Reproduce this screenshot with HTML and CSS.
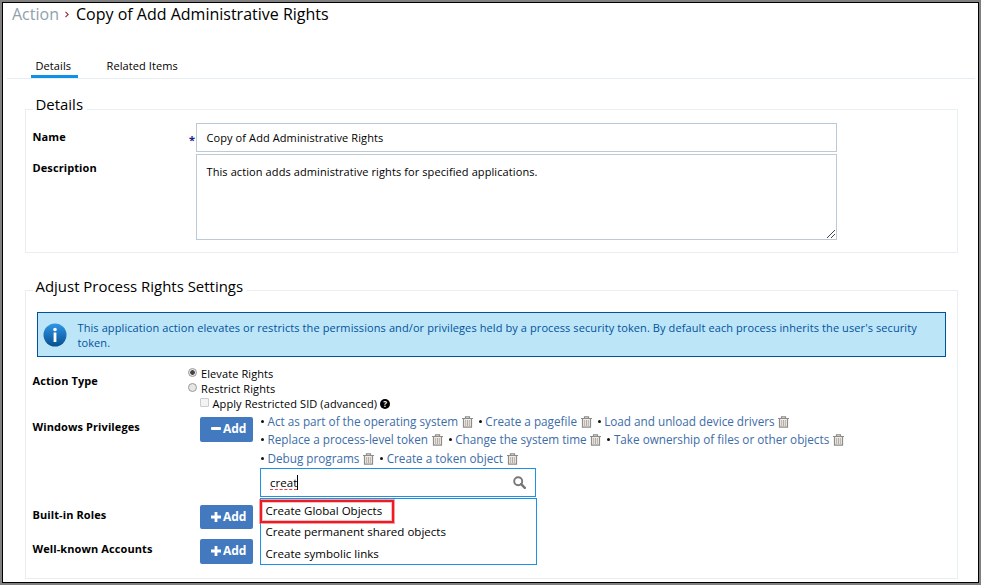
FILE: index.html
```html
<!DOCTYPE html>
<html lang="en">
<head>
<meta charset="utf-8">
<title>Copy of Add Administrative Rights</title>
<link rel="stylesheet" href="styles.css">
</head>
<body>
<svg class="defs" width="0" height="0">
  <symbol id="trash" viewBox="0 0 11 12"><path d="M0 2.5h11M3.5 2V.8h4V2" fill="none" stroke="#8c8c8c" stroke-width="1.2"/><path d="M1.5 3v8.2h8V3" fill="#f3ece4" stroke="#8c8c8c" stroke-width="1.2"/><path d="M3.7 4v6M5.5 4v6M7.3 4v6" stroke="#a9a5a2" stroke-width=".9"/></symbol>
  <symbol id="plus" viewBox="0 0 10 10"><path d="M5 0v10M0 5h10" stroke="#fff" stroke-width="2.8"/></symbol>
</svg>
<div class="window">
  <header class="crumbs"><a class="parent">Action</a><svg class="chev" width="4" height="7" viewBox="0 0 4 7"><path d="M.5 .8L3.2 3.5.5 6.2" fill="none" stroke="#8a3048" stroke-width="1.1"/></svg><h1>Copy of Add Administrative Rights</h1></header>
  <nav class="tabs"><a class="tab active">Details</a><a class="tab">Related Items</a></nav>

  <section class="group details">
    <h2 class="legend">Details</h2>
    <div class="row name-row">
      <label class="label">Name</label><span class="star">*</span>
      <div class="input">Copy of Add Administrative Rights</div>
    </div>
    <div class="row desc-row">
      <label class="label">Description</label><span></span>
      <div class="textarea">This action adds administrative rights for specified applications.
        <svg class="grip" width="8" height="8" viewBox="0 0 8 8"><path d="M0 8L8 0M4 8L8 4" stroke="#444" stroke-width="1"/></svg></div>
    </div>
  </section>

  <section class="group rights">
    <h2 class="legend">Adjust Process Rights Settings</h2>
    <div class="alert">
      <svg width="24" height="24" viewBox="0 0 24 24"><defs><linearGradient id="g" x2="0" y2="1"><stop stop-color="#2f96e8"/><stop offset="1" stop-color="#07508f"/></linearGradient></defs><circle cx="12" cy="12" r="11.5" fill="url(#g)"/><circle cx="12" cy="6.5" r="1.8" fill="#fff"/><path d="M12 9.5v9.5" stroke="#fff" stroke-width="2.8"/></svg>
      <p><span>This application action elevates or restricts the permissions and/or privileges held by a process security token. By default each process inherits the user's security</span><br><span>token.</span></p>
    </div>
    <div class="row type-row">
      <span class="label">Action Type</span>
      <div class="choices">
        <div class="choice"><i class="radio on"></i><span>Elevate Rights</span></div>
        <div class="choice"><i class="radio"></i><span>Restrict Rights</span></div>
        <div class="choice sub"><i class="check"></i><span>Apply Restricted SID (advanced)</span><b class="help">?</b></div>
      </div>
    </div>
    <div class="row priv-row">
      <span class="label">Windows Privileges</span>
      <div class="btn minus"><i></i><span>Add</span></div>
      <div class="picker">
        <ul class="tags r1"><li><a>Act as part of the operating system</a><svg><use href="#trash"/></svg></li><li><a>Create a pagefile</a><svg><use href="#trash"/></svg></li><li><a>Load and unload device drivers</a><svg><use href="#trash"/></svg></li></ul>
        <ul class="tags r2"><li><a>Replace a process-level token</a><svg><use href="#trash"/></svg></li><li><a>Change the system time</a><svg><use href="#trash"/></svg></li><li><a>Take ownership of files or other objects</a><svg><use href="#trash"/></svg></li></ul>
        <ul class="tags r3"><li><a>Debug programs</a><svg><use href="#trash"/></svg></li><li><a>Create a token object</a><svg><use href="#trash"/></svg></li></ul>
        <div class="search"><span class="query">creat</span><i class="caret"></i><svg class="glass" width="13" height="13" viewBox="0 0 13 13"><circle cx="5.2" cy="5.2" r="4" fill="none" stroke="#777" stroke-width="1.9"/><path d="M8.2 8.2l3.6 3.6" stroke="#777" stroke-width="2.5" stroke-linecap="round"/></svg>
          <div class="menu"><div class="opt">Create Global Objects</div><div class="opt">Create permanent shared objects</div><div class="opt">Create symbolic links</div><div class="mark"></div></div>
        </div>
      </div>
    </div>
    <div class="row roles-row"><span class="label">Built-in Roles</span><div class="btn"><svg><use href="#plus"/></svg><span>Add</span></div></div>
    <div class="row acc-row"><span class="label">Well-known Accounts</span><div class="btn tall"><svg><use href="#plus"/></svg><span>Add</span></div></div>
  </section>
</div>
</body>
</html>
```
FILE: styles.css
```css
* { box-sizing: border-box; }
body { margin: 0; font: 11px/15px "Open Sans", sans-serif; letter-spacing: .095px; color: #000; background: #808080; }
.defs { display: block; position: absolute; }
span, a, h1, .opt { white-space: nowrap; }
.window { width: 977px; height: 581px; margin: 2px; border: 1px solid #000; background: #fff; display: flex; flex-direction: column; }
.crumbs { display: flex; align-items: center; height: 23px; padding-left: 9px; font-size: 16px; letter-spacing: 0; }
.parent { width: 46px; color: #8fa1ab; }
.chev { margin: 0 7px 0 7px; }
h1 { margin: 0; font: inherit; }
.tabs { display: flex; height: 53px; align-items: flex-end; border-bottom: 1px solid #e6eef4; margin: 0 3px 0 4px; padding-left: 24px; }
.tab { height: 23px; padding: 3px 4px 0 4.5px; margin-right: 24px; }
.active { width: 47px; border-bottom: 3px solid #0d92e6; }

.group { margin: 0 20px 0 22px; border: 1px solid #e9eef2; }
.details { margin-top: 30px; height: 144px; }
.rights { margin-top: 37px; height: 289px; }
.legend { width: max-content; height: 20px; margin: -15px 0 0 7px; padding: 0 4px 0 2.5px; background: #fff; font: 14.95px/18px "Open Sans", sans-serif; letter-spacing: 0; }
.rights .legend { line-height: 20px; }
.row { display: grid; padding-left: 6.5px; }
.label { font-weight: 700; }
.details .row { grid-template-columns: 156.5px 7px 641px; }
.name-row { margin-top: 8px; height: 29px; }
.name-row .label { padding-top: 6px; }
.star { color: #1a1a8c; font-weight: 700; padding-top: 9px; }
.input, .textarea { border: 1px solid #bccad6; padding: 6px 9.5px; }
.desc-row { margin-top: 2px; height: 86px; }
.desc-row .label { padding-top: 6px; }
.textarea { position: relative; padding-top: 9px; }
.grip { position: absolute; right: 1px; bottom: 1px; }

.alert { display: flex; width: 909px; height: 45px; margin: 16px 0 0 11px; border: 1px solid #00529b; background: #bde5f8; color: #00529b; align-items: center; padding-left: 4.5px; gap: 11px; }
.alert p { margin: 0; }
.rights .row { grid-template-columns: 155.5px 1fr; }
.type-row { height: 45px; margin-top: 9px; }
.type-row .label { padding-top: 7px; }
.choice { display: flex; align-items: center; height: 15px; }
.radio { width: 9px; height: 9px; border: 1px solid #999; border-radius: 50%; background: #e6e6e6; margin: -3px 4px 0 0; }
.radio.on { background: radial-gradient(circle, #444 0 2px, #e6e6e6 2.6px); }
.sub { padding-left: 12px; }
.check { width: 9px; height: 9px; border: 1px solid #ccc; border-radius: 1px; background: #f3f3f3; margin: -3px 3.5px 0 0; }
.help { width: 10px; height: 10px; margin-left: 3px; border-radius: 50%; background: #000; color: #fff; font-size: 8px; line-height: 10px; text-align: center; }
.rights .priv-row { grid-template-columns: 167.5px 53px 1fr; height: 84px; margin-top: 1px; }
.priv-row .label { padding-top: 7px; }
.btn { display: flex; align-items: center; width: 53px; height: 24px; padding-left: 11px; gap: 2px; border-radius: 2px; background: #4279bf; color: #fff; font-weight: 700; font-size: 12px; line-height: 15px; letter-spacing: 0; padding-bottom: 1px; }
.btn svg { width: 10px; height: 10px; }
.btn.minus, .btn.tall { height: 25px; padding-bottom: 2px; }
.btn.minus { margin-top: 5px; }
.btn.minus i { width: 10px; height: 3px; background: #fff; border-radius: 1px; }
.picker { padding-left: 7px; letter-spacing: 0; }
.tags { display: flex; list-style: none; margin: 0; padding: 0; height: 18px; line-height: 18px; font-size: 11.72px; color: #3d6da8; }
.tags.r1, .tags.r3 { height: 19px; line-height: 19px; }
.tags.r2 { line-height: 17px; align-items: flex-start; }
.tags li { display: flex; align-items: center; margin-right: 5px; }
.tags li::before { content: ""; width: 3px; height: 3px; border-radius: 50%; background: #111; margin: 0 3.5px 0 1px; }
.tags svg { width: 11px; height: 12px; margin-left: 3.7px; }
.search { position: relative; display: flex; align-items: center; width: 276px; height: 29px; border: 1px solid #1a93e6; padding: 0 9px; background: #fff; font-size: 11.56px; }
.query { height: 15px; line-height: 15px; border-bottom: 1px dashed #e84040; }
.caret { width: 1px; height: 15px; background: #000; }
.glass { margin-left: auto; }
.menu { position: absolute; z-index: 2; left: -1px; top: 29px; width: 277px; height: 67px; border: 1px solid #1a93e6; background: #fff; padding: 2px 4.5px; }
.opt { height: 21.3px; line-height: 20px; }
.mark { position: absolute; left: -1px; top: 1px; width: 134px; height: 23px; border: 2px solid #ed1c24; box-shadow: 0 0 0 1px #f0606699, inset 0 0 0 1px #f0606666; }
.rights .roles-row, .rights .acc-row { grid-template-columns: 167.5px 53px; }
.roles-row { height: 24px; margin-top: 9px; }
.roles-row .label, .acc-row .label { padding-top: 2px; }
.acc-row { height: 25px; margin-top: 10px; }
```
